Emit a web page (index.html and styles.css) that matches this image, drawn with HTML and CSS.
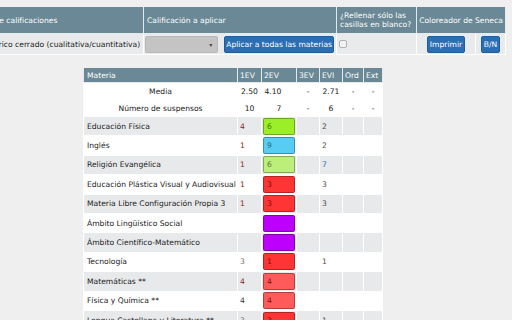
FILE: index.html
```html
<!DOCTYPE html>
<html lang="es">
<head>
  <meta charset="UTF-8">
  <title>Coloreador de Seneca</title>
  <link rel="stylesheet" href="styles.css">
</head>
<body>
  <table class="toolbar">
    <colgroup>
      <col style="width: 171px">
      <col style="width: 193px">
      <col style="width: 80px">
      <col style="width: 59px">
      <col style="width: 30px">
    </colgroup>
    <thead>
      <tr>
        <th>Tipo de calificaciones</th>
        <th>Calificación a aplicar</th>
        <th>¿Rellenar sólo las casillas en blanco?</th>
        <th colspan="2" class="center nowrap">Coloreador de Seneca</th>
      </tr>
    </thead>
    <tbody>
      <tr>
        <td>Numérico cerrado (cualitativa/cuantitativa)</td>
        <td>
          <div class="apply">
            <div class="select"><span class="arrow">▾</span></div>
            <button class="btn">Aplicar a todas las materias</button>
          </div>
        </td>
        <td><input type="checkbox" class="check"></td>
        <td class="center"><button class="btn">Imprimir</button></td>
        <td class="center"><button class="btn">B/N</button></td>
      </tr>
    </tbody>
  </table>

  <table class="grades">
    <colgroup>
      <col style="width: 154px">
      <col style="width: 24px">
      <col style="width: 35px">
      <col style="width: 23px">
      <col style="width: 23px">
      <col style="width: 21px">
      <col style="width: 19px">
    </colgroup>
    <thead>
      <tr>
        <th>Materia</th>
        <th>1EV</th>
        <th>2EV</th>
        <th>3EV</th>
        <th>EVI</th>
        <th>Ord</th>
        <th>Ext</th>
      </tr>
    </thead>
    <tbody>
      <tr class="stat">
        <td>Media</td>
        <td>2.50</td>
        <td class="shift">4.10</td>
        <td>-</td>
        <td>2.71</td>
        <td>-</td>
        <td>-</td>
      </tr>
      <tr class="stat">
        <td>Número de suspensos</td>
        <td>10</td>
        <td>7</td>
        <td>-</td>
        <td>6</td>
        <td>-</td>
        <td>-</td>
      </tr>
    </tbody>
    <tbody class="subjects">
      <tr>
        <td>Educación Física</td>
        <td class="fail">4</td>
        <td class="cell-box"><div class="box lime">6</div></td>
        <td></td>
        <td class="mid">2</td>
        <td></td>
        <td></td>
      </tr>
      <tr>
        <td>Inglés</td>
        <td class="fail">1</td>
        <td class="cell-box"><div class="box sky">9</div></td>
        <td></td>
        <td class="mid">2</td>
        <td></td>
        <td></td>
      </tr>
      <tr>
        <td>Religión Evangélica</td>
        <td class="fail">1</td>
        <td class="cell-box"><div class="box pale">6</div></td>
        <td></td>
        <td class="good">7</td>
        <td></td>
        <td></td>
      </tr>
      <tr>
        <td>Educación Plástica Visual y Audiovisual</td>
        <td class="fail">1</td>
        <td class="cell-box"><div class="box red">3</div></td>
        <td></td>
        <td class="mid">3</td>
        <td></td>
        <td></td>
      </tr>
      <tr>
        <td>Materia Libre Configuración Propia 3</td>
        <td class="fail">1</td>
        <td class="cell-box"><div class="box red">3</div></td>
        <td></td>
        <td class="mid">3</td>
        <td></td>
        <td></td>
      </tr>
      <tr>
        <td>Ámbito Lingüístico Social</td>
        <td></td>
        <td class="cell-box"><div class="box purple"></div></td>
        <td></td>
        <td></td>
        <td></td>
        <td></td>
      </tr>
      <tr>
        <td>Ámbito Científico-Matemático</td>
        <td></td>
        <td class="cell-box"><div class="box purple"></div></td>
        <td></td>
        <td></td>
        <td></td>
        <td></td>
      </tr>
      <tr>
        <td>Tecnología</td>
        <td class="grey">3</td>
        <td class="cell-box"><div class="box red">1</div></td>
        <td></td>
        <td class="mid">1</td>
        <td></td>
        <td></td>
      </tr>
      <tr>
        <td>Matemáticas **</td>
        <td class="fail">4</td>
        <td class="cell-box"><div class="box salmon">4</div></td>
        <td></td>
        <td></td>
        <td></td>
        <td></td>
      </tr>
      <tr>
        <td>Física y Química **</td>
        <td class="dark">4</td>
        <td class="cell-box"><div class="box salmon">4</div></td>
        <td></td>
        <td></td>
        <td></td>
        <td></td>
      </tr>
      <tr>
        <td>Lengua Castellana y Literatura **</td>
        <td class="grey">3</td>
        <td class="cell-box"><div class="box red">3</div></td>
        <td></td>
        <td class="mid">1</td>
        <td></td>
        <td></td>
      </tr>
    </tbody>
  </table>
</body>
</html>
```
FILE: styles.css
```css
body {
  margin: 0;
  padding-top: 7px;
  background: #efefef;
  font-family: "DejaVu Sans", Verdana, sans-serif;
  font-size: 7.6px;
  line-height: 9px;
  color: #222;
  overflow: hidden;
}

table {
  border-collapse: collapse;
  table-layout: fixed;
}

th {
  background: #6a8895;
  color: white;
  font-weight: normal;
  text-align: left;
  border: 1px solid #e4eaec;
}

td {
  border: 1px solid white;
}

.center {
  text-align: center;
}

.nowrap {
  white-space: nowrap;
}

/* barra superior */

.toolbar {
  width: 533px;
  margin-left: -28px;
}

.toolbar th {
  height: 26px;
  padding: 0 2px 0 3px;
  border-top: none;
}

.toolbar th.nowrap {
  padding: 0;
}

.toolbar td {
  height: 20px;
  padding: 0 2px;
  background: #e8eaeb;
  white-space: nowrap;
}

.toolbar td:first-child {
  padding-left: 3px;
}

.apply {
  display: flex;
  align-items: center;
  gap: 6px;
  margin-left: -1px;
}

.select {
  display: flex;
  justify-content: flex-end;
  align-items: center;
  width: 75px;
  height: 17px;
  padding-right: 5px;
  box-sizing: border-box;
  background: #c4c4c4;
  border: 1px solid #b8b8b8;
  border-radius: 2px;
}

.arrow {
  font-size: 6px;
  color: #444;
}

.btn {
  height: 17px;
  padding: 0 2px;
  background: #2b6eb4;
  border: 1px solid #1f5d9c;
  border-radius: 2px;
  color: white;
  font-family: inherit;
  font-size: 7.6px;
  line-height: 9px;
}

.apply .btn {
  padding: 0 1px;
}

.check {
  appearance: none;
  display: block;
  width: 8px;
  height: 8px;
  margin: 0;
  background: #f3f3f3;
  border: 1px solid #aeb3b5;
  border-radius: 2px;
}

/* tabla de notas */

.grades {
  width: 299px;
  margin: 13px 0 0 83px;
}

.grades th {
  height: 14px;
  padding: 0 2px;
  border-top: none;
}

.grades th:first-child {
  padding-left: 3px;
}

.grades td {
  padding: 0 2px;
  background: white;
}

.stat td {
  text-align: center;
  color: #222;
}

.stat td.shift {
  padding-right: 14px;
}

.stat:first-child td {
  height: 17px;
}

.stat:nth-child(2) td {
  height: 15px;
}

.subjects td {
  height: 18.4px;
}

.subjects td:first-child {
  padding-left: 3px;
  white-space: nowrap;
}

.subjects tr:nth-child(odd) td {
  background: #e7e9ea;
}

.subjects .cell-box {
  padding: 0 1px;
}

.box {
  width: 32px;
  height: 17px;
  box-sizing: border-box;
  padding-left: 3px;
  line-height: 15px;
  border: 1px solid rgba(0, 0, 0, 0.3);
  border-radius: 2px;
  color: rgba(0, 0, 0, 0.55);
}

.lime { background: #9bef27; }
.sky { background: #58cdf3; }
.pale { background: #bcef7a; }
.red { background: #ff3434; color: #7a1010; }
.salmon { background: #ff5b5b; color: #7a1010; }
.purple { background: #bd00fb; }

.fail { color: #8b1c1c; }
.grey { color: #777; }
.dark { color: #333; }
.mid { color: #5b4848; }
.good { color: #2b6eb4; }
```
